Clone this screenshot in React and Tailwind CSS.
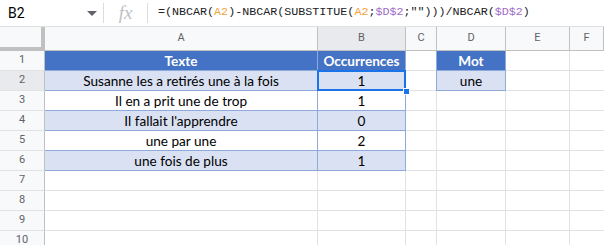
import React from "react";

const cols = [
  { key: "A", w: "w-[273px]" },
  { key: "B", w: "w-[88px]" },
  { key: "C", w: "w-[31px]" },
  { key: "D", w: "w-[69px]" },
  { key: "E", w: "w-[64px]" },
  { key: "F", w: "flex-1" },
];

const rows = [
  { n: 1, a: "Texte", b: "Occurrences", d: "Mot", head: true },
  { n: 2, a: "Susanne les a retirés une à la fois", b: "1", d: "une", band: true },
  { n: 3, a: "Il en a prit une de trop", b: "1" },
  { n: 4, a: "Il fallait l'apprendre", b: "0", band: true },
  { n: 5, a: "une par une", b: "2" },
  { n: 6, a: "une fois de plus", b: "1", band: true },
  { n: 7 },
  { n: 8 },
  { n: 9 },
  { n: 10 },
];

const dataFont = { fontFamily: "Lato, 'Open Sans', sans-serif" };

function Cell({ w, cls = "", children, style }) {
  return (
    <div
      className={`${w} h-full shrink-0 flex items-center justify-center box-border pt-px ${cls}`}
      style={style}
    >
      {children}
    </div>
  );
}

function DataRow({ r }) {
  const tableA = r.n <= 6;
  const tableD = r.n <= 2;
  const bgA = r.head ? "bg-[#4472c4]" : r.band ? "bg-[#d9e1f2]" : "bg-white";
  const bgD = r.n === 1 ? "bg-[#4472c4]" : r.n === 2 ? "bg-[#d9e1f2]" : "bg-white";
  const txt = r.head
    ? "text-white font-bold text-[13.6px]"
    : "text-black text-[13.6px]";
  const bA = tableA
    ? "border-b border-b-[#8eaadb] border-r border-r-[#e2e2e2]"
    : "border-b border-b-[#e2e2e2] border-r border-r-[#e2e2e2]";
  const bB = tableA
    ? "border-b border-b-[#8eaadb] border-r border-r-[#8eaadb] border-l border-l-[#8eaadb] -ml-px"
    : "border-b border-b-[#e2e2e2] border-r border-r-[#e2e2e2]";
  const bD = tableD
    ? "border-b border-b-[#8eaadb] border-r border-r-[#8eaadb] border-l border-l-[#8eaadb] -ml-px"
    : "border-b border-b-[#e2e2e2] border-r border-r-[#e2e2e2]";
  const rowHeadSel = r.n === 2;
  return (
    <div className="flex h-[20px]">
      <div
        className={`w-[45px] h-full shrink-0 box-border border-r border-r-[#c0c0c0] border-b border-b-[#e2e2e2] flex items-center justify-center text-[11px] text-[#5f6368] ${
          rowHeadSel ? "bg-[#e8eaed]" : "bg-[#f8f9fa]"
        }`}
        style={{ fontFamily: "Roboto, sans-serif" }}
      >
        {r.n}
      </div>
      <Cell w="w-[273px]" cls={`${bA} ${tableA ? bgA : "bg-white"} ${txt}`} style={dataFont}>
        {r.a}
      </Cell>
      <Cell
        w={tableA ? "w-[89px]" : "w-[88px]"}
        cls={`${bB} ${tableA ? bgA : "bg-white"} ${txt} relative`}
        style={dataFont}
      >
        {r.b}
        {r.n === 2 && (
          <>
            <div className="absolute -left-px -top-px -right-px -bottom-px border-2 border-[#1a73e8]" />
            <div className="absolute right-[-5px] bottom-[-5px] w-[7px] h-[7px] bg-[#1a73e8] border border-white z-10" />
          </>
        )}
      </Cell>
      <Cell w="w-[31px]" cls="border-b border-b-[#e2e2e2] border-r border-r-[#e2e2e2] bg-white" />
      <Cell
        w={tableD ? "w-[70px]" : "w-[69px]"}
        cls={`${bD} ${bgD} ${r.n === 1 ? "text-white font-bold text-[13.6px]" : "text-black text-[13.6px]"}`}
        style={dataFont}
      >
        {r.d}
      </Cell>
      <Cell w="w-[64px]" cls="border-b border-b-[#e2e2e2] border-r border-r-[#e2e2e2] bg-white" />
      <div className="flex-1 h-full border-b border-b-[#e2e2e2] bg-white" />
    </div>
  );
}

export default function App() {
  const mono = { fontFamily: "'Liberation Mono', 'DejaVu Sans Mono', monospace" };
  const orange = "text-[#f4a23a]";
  const purple = "text-[#a06cc9]";
  return (
    <div className="w-[604px] h-[245px] overflow-hidden bg-white select-none">
      {/* formula bar */}
      <div className="h-[27px] flex items-center border-b border-b-[#e0e0e0] box-border bg-white">
        <div
          className="w-[103px] h-full flex items-center pl-[8px] text-[14px] text-black"
          style={{ fontFamily: "Roboto, sans-serif" }}
        >
          <span className="flex-1">B2</span>
          <svg width="10" height="5" viewBox="0 0 10 5" className="mr-[6px] mt-[1px]">
            <path d="M0 0 L10 0 L5 5 Z" fill="#5f6368" />
          </svg>
        </div>
        <div className="w-px h-[20px] bg-[#dadce0]" />
        <div className="w-[43px] h-full flex items-center justify-center">
          <span
            className="text-[#bdc1c6] text-[19px] italic"
            style={{ fontFamily: "'Liberation Serif', serif" }}
          >
            fx
          </span>
        </div>
        <div className="w-px h-[20px] bg-[#dadce0]" />
        <div className="pl-[10px] text-[11.7px] text-[#202124] whitespace-pre" style={mono}>
          =(NBCAR(<span className={orange}>A2</span>)-NBCAR(SUBSTITUE(
          <span className={orange}>A2</span>;<span className={purple}>$D$2</span>;"")))/NBCAR(
          <span className={purple}>$D$2</span>)
        </div>
      </div>
      {/* column header */}
      <div className="flex h-[24px]" style={{ fontFamily: "Roboto, sans-serif" }}>
        <div className="w-[45px] h-full shrink-0 box-border bg-[#f8f9fa] border-r-[4px] border-r-[#c0c0c0] border-b-[4px] border-b-[#c0c0c0]" />
        {cols.map((c) => (
          <div
            key={c.key}
            className={`${c.w} h-full shrink-0 box-border border-r border-r-[#c0c0c0] border-b border-b-[#c0c0c0] flex items-center justify-center text-[11px] text-[#5f6368] ${
              c.key === "B" ? "bg-[#e8eaed]" : "bg-[#f8f9fa]"
            }`}
          >
            {c.key}
          </div>
        ))}
      </div>
      {rows.map((r) => (
        <DataRow key={r.n} r={r} />
      ))}
    </div>
  );
}
